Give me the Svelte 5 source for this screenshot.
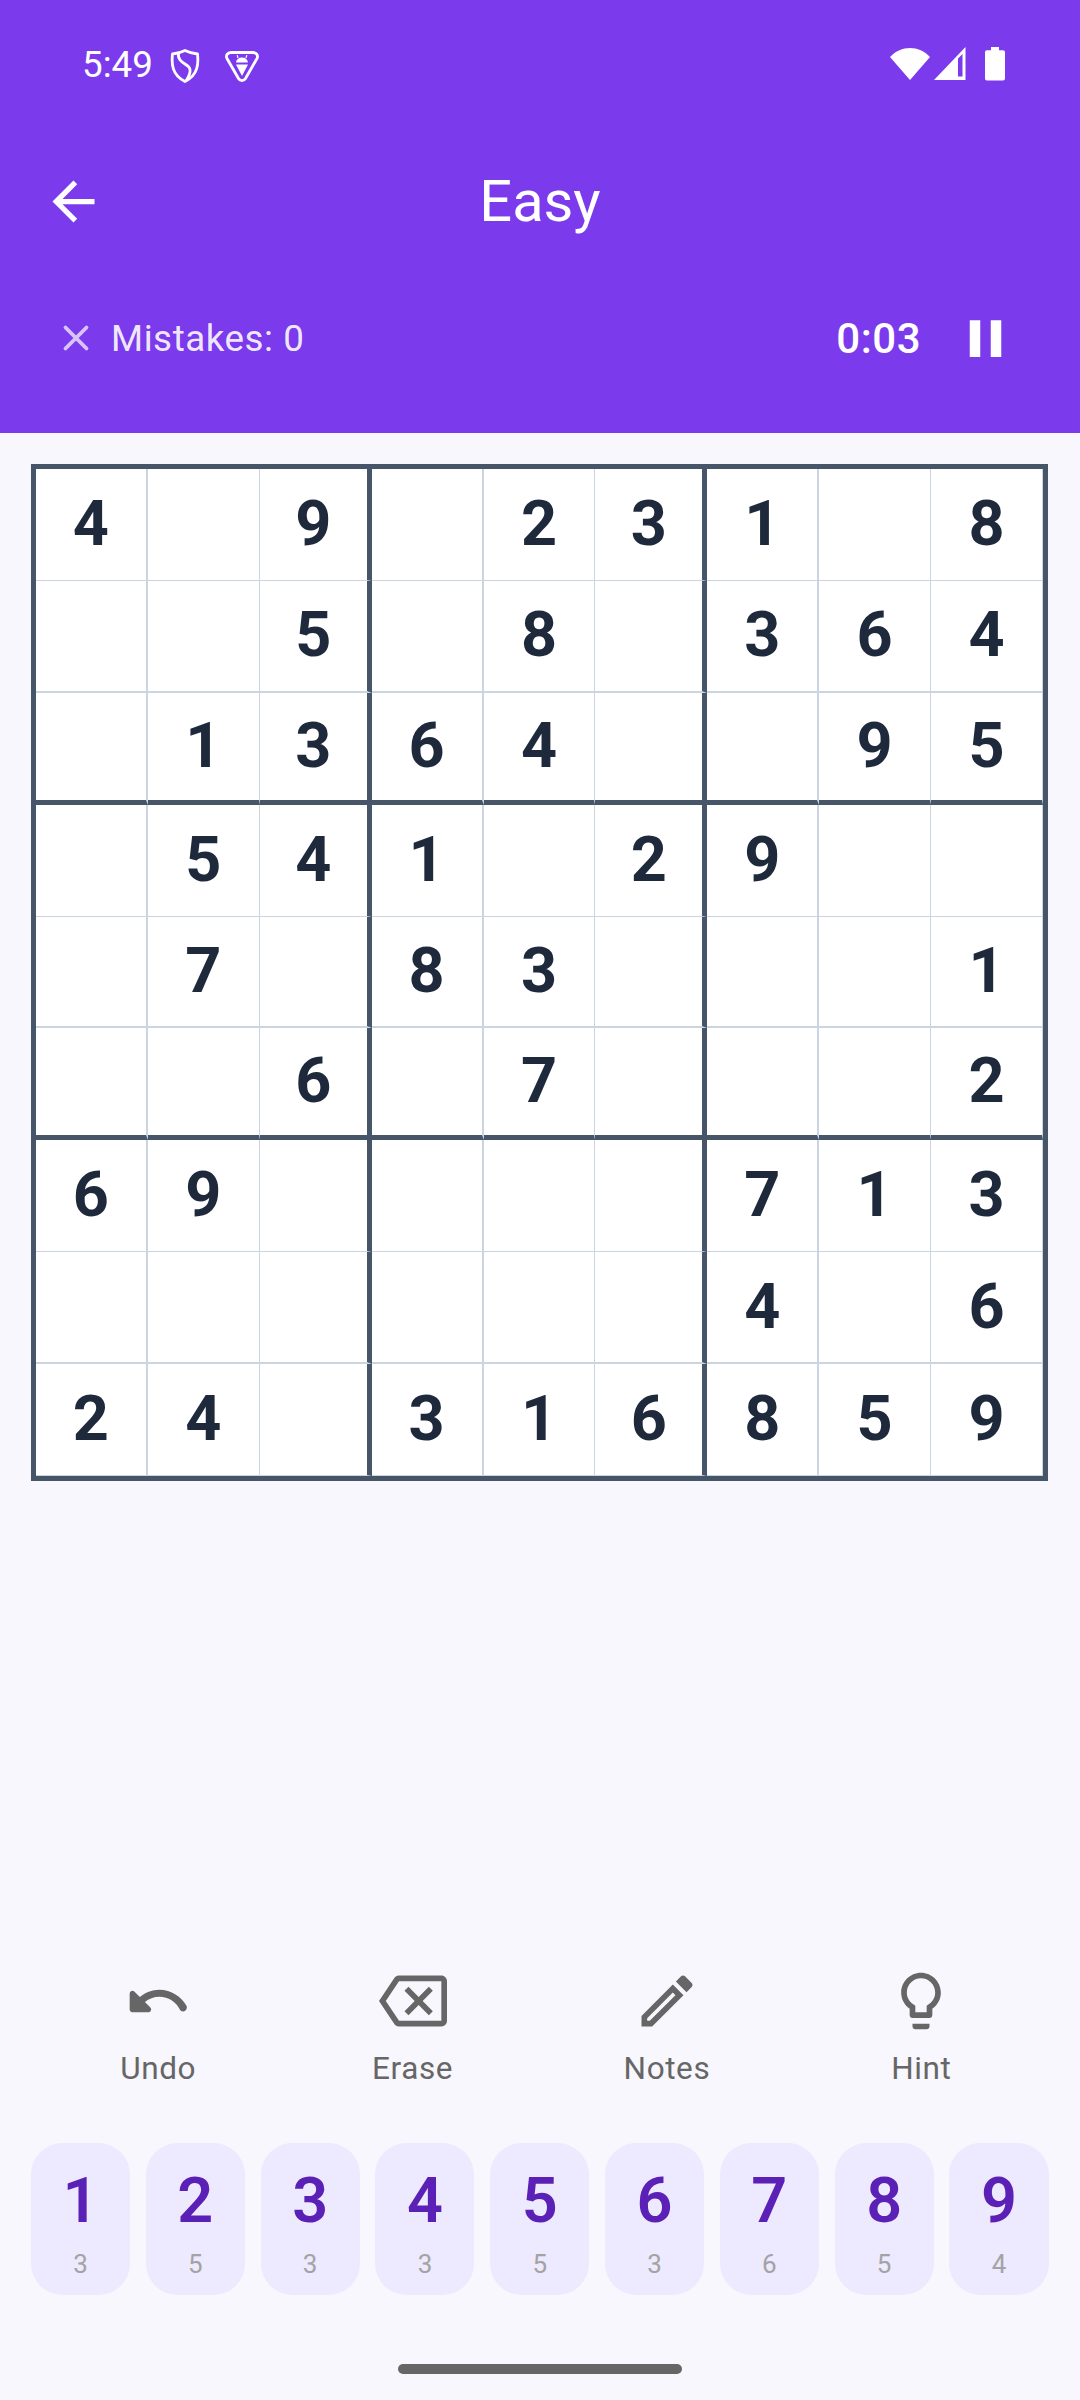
<script>
  const rows = [
    "4.9.231.8",
    "..5.8.364",
    ".1364..95",
    ".541.29..",
    ".7.83...1",
    "..6.7...2",
    "69....713",
    "......4.6",
    "24.316859"
  ];
  const cells = rows.flatMap((r) => r.split("").map((c) => (c === "." ? "" : c)));

  const keys = [
    { n: 1, left: 3 },
    { n: 2, left: 5 },
    { n: 3, left: 3 },
    { n: 4, left: 3 },
    { n: 5, left: 5 },
    { n: 6, left: 3 },
    { n: 7, left: 6 },
    { n: 8, left: 5 },
    { n: 9, left: 4 }
  ];

  const actions = [
    {
      label: "Undo",
      d: "M12.5 8c-2.65 0-5.05.99-6.9 2.6L3.71 8.71C3.08 8.08 2 8.52 2 9.41V15c0 .55.45 1 1 1h5.59c.89 0 1.34-1.08.71-1.71l-1.91-1.91c1.39-1.16 3.16-1.88 5.12-1.88 3.16 0 5.89 1.84 7.19 4.5.27.56.91.84 1.5.64.8-.26 1.21-1.17.85-1.94C20.3 10.5 16.68 8 12.5 8z"
    },
    {
      label: "Erase",
      d: "M22 3H7c-.69 0-1.23.35-1.59.88L0 12l5.41 8.11c.36.53.9.89 1.59.89h15c1.1 0 2-.9 2-2V5c0-1.1-.9-2-2-2zm0 16H7.07L2.4 12l4.66-7H22v14zM10.41 17L14 13.41 17.59 17 19 15.59 15.41 12 19 8.41 17.59 7 14 10.59 10.41 7 9 8.41 12.59 12 9 15.59z"
    },
    {
      label: "Notes",
      d: "M14.06 9.02l.92.92L5.92 19H5v-.92l9.06-9.06M17.66 3c-.25 0-.51.1-.7.29l-1.83 1.83 3.75 3.75 1.83-1.83c.39-.39.39-1.02 0-1.41l-2.34-2.34c-.2-.2-.45-.29-.71-.29zm-3.6 3.19L3 17.25V21h3.75L17.81 9.94l-3.75-3.75z"
    },
    {
      label: "Hint",
      d: "M9 21c0 .55.45 1 1 1h4c.55 0 1-.45 1-1v-1H9v1zm3-19C8.14 2 5 5.14 5 9c0 2.38 1.19 4.47 3 5.74V17c0 .55.45 1 1 1h6c.55 0 1-.45 1-1v-2.26c1.81-1.27 3-3.36 3-5.74 0-3.86-3.14-7-7-7zm2.85 11.1l-.85.6V16h-4v-2.3l-.85-.6C7.8 12.16 7 10.63 7 9c0-2.76 2.24-5 5-5s5 2.24 5 5c0 1.63-.8 3.16-2.15 4.1z"
    }
  ];
</script>

<div class="screen">
  <header class="top">
    <div class="status">
      <span class="clock">5:49</span>
      <svg class="shield" width="30" height="34" viewBox="0 0 30 34" fill="none" stroke="#fff" stroke-width="2.8">
        <path d="M15 1.5 C19 3.5 23 4.5 27.5 5 C28.5 14 28.5 26 15 32.5 C1.5 26 1.5 14 2.5 5 C7 4.5 11 3.5 15 1.5 Z" stroke-linejoin="round" />
        <path d="M8.5 3.5 C7.5 10 11 12.5 15 15 C20 18 23 21 16 32" />
      </svg>
      <svg class="vpn" width="34" height="31" viewBox="0 0 34 31" fill="none">
        <path d="M6 1.5 H28 C31.5 1.5 33.5 4.5 32 7.5 L20.5 27.5 C18.8 30.3 15.2 30.3 13.5 27.5 L2 7.5 C.5 4.5 2.5 1.5 6 1.5 Z" stroke="#fff" stroke-width="2.8" stroke-linejoin="round" />
        <path d="M11 11.5 C11.3 8.5 13.5 6.5 17 6.5 C20.5 6.5 22.7 8.5 23 11.5 Z M11 13.5 H23 L17 25 Z" fill="#fff" />
        <path d="M13 7 L12.2 4.2 M21 7 L21.8 4.2" stroke="#fff" stroke-width="1.2" />
      </svg>
      <span class="grow"></span>
      <svg class="wifi" width="40" height="32" viewBox="0 0 40 32"><path d="M0 9 C11 -3 29 -3 40 9 L20 32 Z" fill="#fff" /></svg>
      <svg class="signal" width="31.5" height="33" viewBox="0 0 31.5 33"><path fill-rule="evenodd" d="M0 33 L31.5 0 V33 Z M24 11.5 V29.5 H28.5 V7 Z" fill="#fff" /></svg>
      <svg class="battery" width="20" height="33.5" viewBox="0 0 20 33.5"><path d="M6 0 H14 V3.3 H18 C19.2 3.3 20 4.1 20 5.3 V31.5 C20 32.7 19.2 33.5 18 33.5 H2 C.8 33.5 0 32.7 0 31.5 V5.3 C0 4.1 .8 3.3 2 3.3 H6 Z" fill="#fff" /></svg>
    </div>

    <div class="appbar">
      <svg class="back" width="63" height="63" viewBox="0 0 24 24"><path d="M20 11H7.83l5.59-5.59L12 4l-8 8 8 8 1.41-1.41L7.83 13H20v-2z" fill="#fff" /></svg>
      <h1>Easy</h1>
    </div>

    <div class="stats">
      <svg class="close" width="42" height="42" viewBox="0 0 24 24"><path d="M6 6 18 18M18 6 6 18" stroke="#fff" stroke-opacity="0.7" stroke-width="2.2" stroke-linecap="round" fill="none" /></svg>
      <span class="mistakes">Mistakes: 0</span>
      <span class="grow"></span>
      <span class="timer">0:03</span>
      <svg class="pause" width="63" height="63" viewBox="0 0 24 24"><path d="M6 19h4V5H6v14zm8-14v14h4V5h-4z" fill="#fff" /></svg>
    </div>
  </header>

  <div class="board">
    {#each cells as value, i}
      <div
        class="cell"
        class:wide-right={i % 3 === 0}
        class:wide-bottom={Math.floor(i / 9) % 3 === 1}
        class:box-right={i % 9 === 2 || i % 9 === 5}
        class:box-bottom={(i >= 18 && i < 27) || (i >= 45 && i < 54)}
      >
        {value}
      </div>
    {/each}
  </div>

  <div class="controls">
    <div class="actions">
      {#each actions as action}
        <div class="action">
          <svg width="68" height="68" viewBox="0 0 24 24"><path d={action.d} fill="#666" /></svg>
          <span>{action.label}</span>
        </div>
      {/each}
    </div>

    <div class="keys">
      {#each keys as key}
        <div class="key">
          <span class="num">{key.n}</span>
          <span class="left">{key.left}</span>
        </div>
      {/each}
    </div>

    <div class="home"></div>
  </div>
</div>

<style>
  :global(body) {
    background: #f8f7fd;
  }
  .screen {
    width: 1080px;
    height: 2400px;
    display: flex;
    flex-direction: column;
    background: #f8f7fd;
    font-family: Roboto, "Liberation Sans", sans-serif;
    overflow: hidden;
  }
  .top {
    height: 433px;
    background: #7c3aed;
    color: #fff;
    flex-shrink: 0;
  }
  .grow {
    flex: 1;
  }

  .status {
    height: 127px;
    box-sizing: border-box;
    padding: 47px 75px 0 82px;
    display: flex;
    align-items: flex-start;
  }
  .clock {
    font-size: 36.75px;
    line-height: 36px;
  }
  .shield {
    margin: 2px 0 0 17px;
  }
  .vpn {
    margin: 4px 0 0 25px;
  }
  .wifi {
    margin: 1px 4px 0 0;
  }
  .signal {
    margin-right: 19.5px;
  }

  .appbar {
    height: 148px;
    display: flex;
    align-items: center;
    position: relative;
    padding-left: 42px;
  }
  .appbar h1 {
    position: absolute;
    left: 0;
    right: 0;
    margin: 0;
    text-align: center;
    font-size: 57.75px;
    font-weight: 400;
  }

  .stats {
    height: 126.5px;
    display: flex;
    align-items: center;
    padding: 0 63px 0 55px;
  }
  .mistakes {
    margin-left: 14px;
    font-size: 36.75px;
    letter-spacing: 0.55px;
    color: rgba(255, 255, 255, 0.9);
  }
  .timer {
    font-size: 42px;
    font-weight: 500;
    letter-spacing: 0.5px;
    margin-right: 33px;
  }

  .board {
    margin: 31px 32px 0 31px;
    width: 1017px;
    box-sizing: border-box;
    border: 5px solid #475569;
    background: #fff;
    display: grid;
    grid-template-columns: repeat(9, 1fr);
  }
  .cell {
    aspect-ratio: 1;
    box-sizing: border-box;
    display: flex;
    align-items: center;
    justify-content: center;
    padding-bottom: 2px;
    border-right: 1px solid #cbd5e1;
    border-bottom: 1px solid #cbd5e1;
    color: #1e293b;
    font-size: 63px;
    font-weight: 700;
  }
  .wide-right {
    border-right-width: 2px;
  }
  .wide-bottom {
    border-bottom-width: 2px;
  }
  .box-right {
    border-right: 5px solid #475569;
  }
  .box-bottom {
    border-bottom: 5px solid #475569;
  }

  .controls {
    margin-top: auto;
    padding: 0 31.5px 26px 31px;
  }
  .actions {
    display: grid;
    grid-template-columns: repeat(4, 1fr);
  }
  .action {
    display: flex;
    flex-direction: column;
    align-items: center;
    color: #666;
  }
  .action span {
    margin-top: 13.5px;
    font-size: 31.5px;
    line-height: 42px;
    letter-spacing: 0.6px;
  }

  .keys {
    margin-top: 52.4px;
    display: grid;
    grid-template-columns: repeat(9, 1fr);
    gap: 15.75px;
  }
  .key {
    height: 152.3px;
    border-radius: 31.5px;
    background: #ede9fe;
    display: flex;
    flex-direction: column;
    align-items: center;
  }
  .num {
    margin-top: 21px;
    color: #5b21b6;
    font-size: 63px;
    font-weight: 600;
    line-height: 74px;
  }
  .left {
    margin-top: 11px;
    color: #a3a3a3;
    font-size: 26px;
    line-height: 30px;
  }

  .home {
    width: 284px;
    height: 10px;
    border-radius: 6px;
    background: #666;
    margin: 69px auto 0;
  }
</style>
